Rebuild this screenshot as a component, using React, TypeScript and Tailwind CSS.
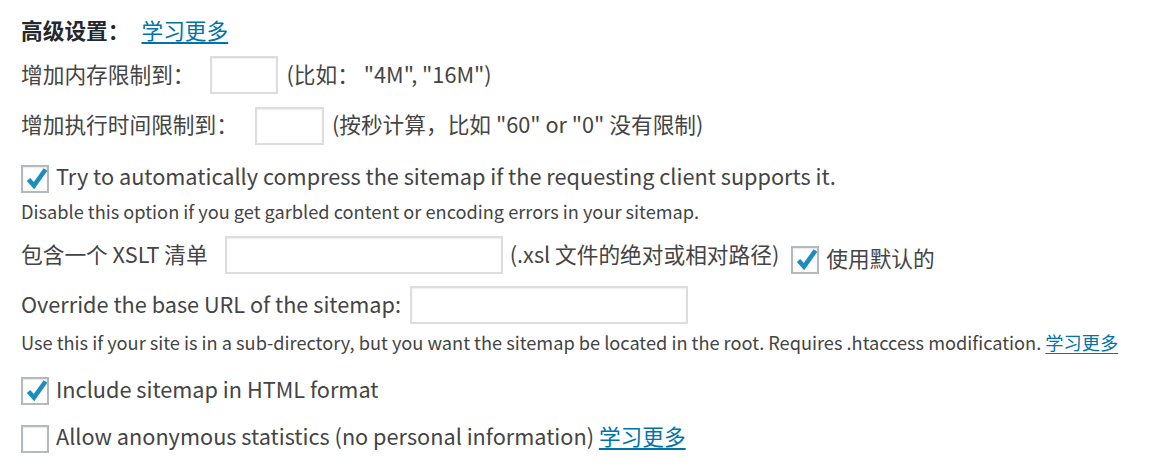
import { ReactNode } from "react";

const font = { fontFamily: '"Noto Sans CJK SC", "Noto Sans", sans-serif' };

// WP-style checkbox, the tick overlaps the frame like the dashicon does
const Check = ({ checked }: { checked: boolean }) => (
  <span className="relative block h-[28px] w-[28px] shrink-0 border-2 border-[#b4b9be] bg-white shadow-[inset_0_1px_2px_rgba(0,0,0,0.1)]">
    {checked && (
      <svg viewBox="0 0 28 28" className="absolute left-[-2px] top-[-2px] h-[28px] w-[28px]">
        <polyline
          points="7.5,14.5 13,20.5 24.5,4.5"
          fill="none"
          stroke="#1e8cbe"
          strokeWidth="4.6"
          strokeLinejoin="miter"
        />
      </svg>
    )}
  </span>
);

const Box = ({ className }: { className: string }) => (
  <input
    type="text"
    className={`${className} block h-[38px] shrink-0 border-2 border-[#dddddd] bg-white shadow-[inset_0_1px_2px_rgba(0,0,0,0.07)] outline-none`}
  />
);

const Link = ({ children }: { children: ReactNode }) => (
  <a href="#" className="text-[#0073aa] underline underline-offset-[3px]">
    {children}
  </a>
);

export default function App() {
  return (
    <div
      className="min-h-screen w-full bg-white pl-[21px] pt-[14px] text-[21.7px] leading-[28px] text-[#444]"
      style={font}
    >
      <div className="flex h-[36px] items-center pb-[4px]">
        <span className="font-bold text-[#23282d]">高级设置：</span>
        <span className="ml-[12px]">
          <Link>学习更多</Link>
        </span>
      </div>

      <div className="mt-[6px] flex h-[38px] items-center">
        <span className="pb-[3px]">增加内存限制到：</span>
        <Box className="ml-[15px] w-[68px]" />
        <span className="ml-[9px] pb-[3px]">(比如： "4M", "16M")</span>
      </div>

      <div className="mt-[12px] flex h-[39px] items-center">
        <span className="pb-[3px]">增加执行时间限制到：</span>
        <Box className="ml-[17px] w-[69px]" />
        <span className="ml-[8px] pb-[3px]">(按秒计算，比如 "60" or "0" 没有限制)</span>
      </div>

      <label className="mt-[20px] flex h-[28px] items-center gap-[7px]">
        <Check checked />
        <span className="pb-[7px]">Try to automatically compress the sitemap if the requesting client supports it.</span>
      </label>

      <p className="mt-[6px] text-[18.2px] leading-[24px]">
        Disable this option if you get garbled content or encoding errors in your sitemap.
      </p>

      <div className="mt-[13px] flex h-[38px] items-center">
        <span className="pb-[3px]">包含一个 XSLT 清单</span>
        <Box className="ml-[17px] w-[278px]" />
        <span className="ml-[7px] pb-[3px]">(.xsl 文件的绝对或相对路径)</span>
        <span className="ml-[12px] mt-[10px] flex items-center gap-[7px]">
          <Check checked />
          <span className="pb-[5px]">使用默认的</span>
        </span>
      </div>

      <div className="mt-[12px] flex h-[38px] items-center">
        <span className="pb-[3px]">Override the base URL of the sitemap:</span>
        <Box className="ml-[9px] w-[278px]" />
      </div>

      <p className="mt-[6px] text-[18.2px] leading-[24px]">
        Use this if your site is in a sub-directory, but you want the sitemap be located in the root. Requires
        .htaccess modification. <Link>学习更多</Link>
      </p>

      <label className="mt-[23px] flex h-[28px] items-center gap-[7px]">
        <Check checked />
        <span className="pb-[5px]">Include sitemap in HTML format</span>
      </label>

      <label className="mt-[20px] flex h-[28px] items-center gap-[7px]">
        <Check checked={false} />
        <span className="pb-[7px]">
          Allow anonymous statistics (no personal information) <Link>学习更多</Link>
        </span>
      </label>
    </div>
  );
}
